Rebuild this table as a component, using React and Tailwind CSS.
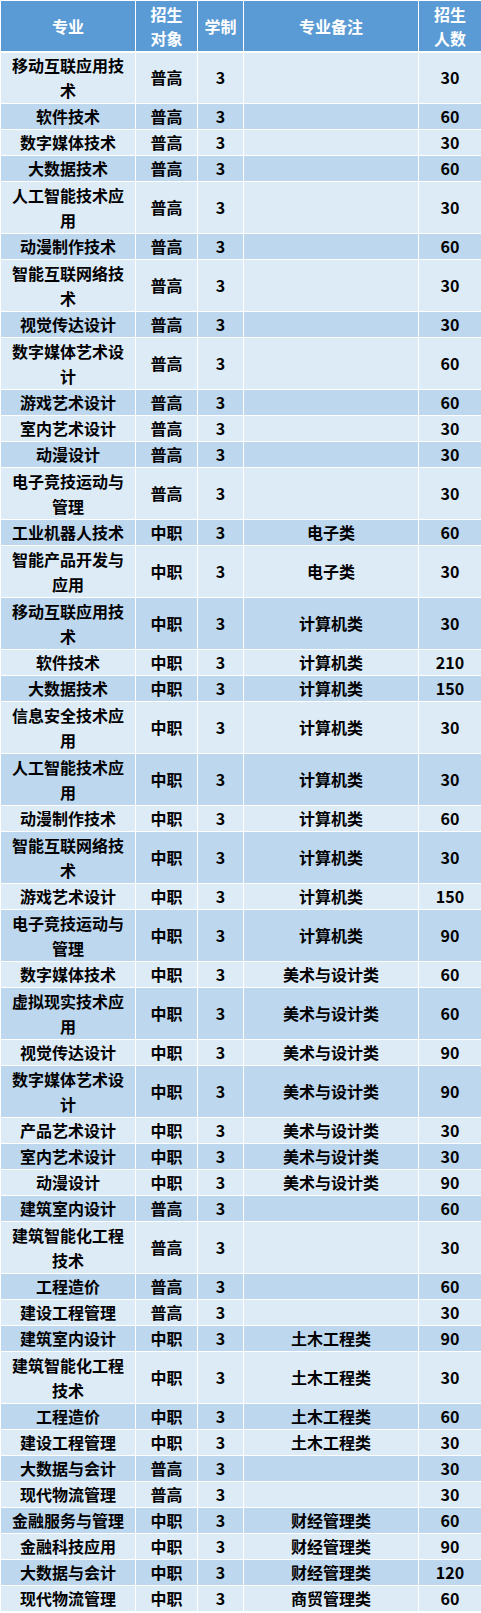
import React from 'react';

const rows = [
  ['移动互联应用技术', '普高', '3', '', '30', 2],
  ['软件技术', '普高', '3', '', '60'],
  ['数字媒体技术', '普高', '3', '', '30'],
  ['大数据技术', '普高', '3', '', '60'],
  ['人工智能技术应用', '普高', '3', '', '30', 2],
  ['动漫制作技术', '普高', '3', '', '60'],
  ['智能互联网络技术', '普高', '3', '', '30', 2],
  ['视觉传达设计', '普高', '3', '', '30'],
  ['数字媒体艺术设计', '普高', '3', '', '60', 2],
  ['游戏艺术设计', '普高', '3', '', '60'],
  ['室内艺术设计', '普高', '3', '', '30'],
  ['动漫设计', '普高', '3', '', '30'],
  ['电子竞技运动与管理', '普高', '3', '', '30', 2],
  ['工业机器人技术', '中职', '3', '电子类', '60'],
  ['智能产品开发与应用', '中职', '3', '电子类', '30', 2],
  ['移动互联应用技术', '中职', '3', '计算机类', '30', 2],
  ['软件技术', '中职', '3', '计算机类', '210'],
  ['大数据技术', '中职', '3', '计算机类', '150'],
  ['信息安全技术应用', '中职', '3', '计算机类', '30', 2],
  ['人工智能技术应用', '中职', '3', '计算机类', '30', 2],
  ['动漫制作技术', '中职', '3', '计算机类', '60'],
  ['智能互联网络技术', '中职', '3', '计算机类', '30', 2],
  ['游戏艺术设计', '中职', '3', '计算机类', '150'],
  ['电子竞技运动与管理', '中职', '3', '计算机类', '90', 2],
  ['数字媒体技术', '中职', '3', '美术与设计类', '60'],
  ['虚拟现实技术应用', '中职', '3', '美术与设计类', '60', 2],
  ['视觉传达设计', '中职', '3', '美术与设计类', '90'],
  ['数字媒体艺术设计', '中职', '3', '美术与设计类', '90', 2],
  ['产品艺术设计', '中职', '3', '美术与设计类', '30'],
  ['室内艺术设计', '中职', '3', '美术与设计类', '30'],
  ['动漫设计', '中职', '3', '美术与设计类', '90'],
  ['建筑室内设计', '普高', '3', '', '60'],
  ['建筑智能化工程技术', '普高', '3', '', '30', 2],
  ['工程造价', '普高', '3', '', '60'],
  ['建设工程管理', '普高', '3', '', '30'],
  ['建筑室内设计', '中职', '3', '土木工程类', '90'],
  ['建筑智能化工程技术', '中职', '3', '土木工程类', '30', 2],
  ['工程造价', '中职', '3', '土木工程类', '60'],
  ['建设工程管理', '中职', '3', '土木工程类', '30'],
  ['大数据与会计', '普高', '3', '', '30'],
  ['现代物流管理', '普高', '3', '', '30'],
  ['金融服务与管理', '中职', '3', '财经管理类', '60'],
  ['金融科技应用', '中职', '3', '财经管理类', '90'],
  ['大数据与会计', '中职', '3', '财经管理类', '120'],
  ['现代物流管理', '中职', '3', '商贸管理类', '60'],
];

const td = 'border border-white text-center align-middle p-0';

const App = () => {
  return (
    <div
      className="w-[481px] bg-white text-[16px] leading-[25px] text-black font-semibold"
      style={{ fontFamily: '"Noto Sans CJK SC", "Noto Sans", sans-serif' }}
    >
      <table className="w-[481px] table-fixed border-collapse border-l border-t border-l-[#c8c8c8] border-t-[#c8c8c8]">
        <colgroup>
          <col className="w-[135px]" />
          <col className="w-[62px]" />
          <col className="w-[46px]" />
          <col className="w-[175px]" />
          <col className="w-[63px]" />
        </colgroup>
        <thead>
          <tr className="h-[51px] bg-[#5b9bd5] text-white font-bold leading-[24px]">
            <th className={`${td} border-b-2`}>专业</th>
            <th className={`${td} border-b-2`}>招生<br />对象</th>
            <th className={`${td} border-b-2`}>学制</th>
            <th className={`${td} border-b-2`}>专业备注</th>
            <th className={`${td} border-b-2`}>招生<br />人数</th>
          </tr>
        </thead>
        <tbody>
          {rows.map((r, i) => (
            <tr
              key={i}
              className={`${r[5] === 2 ? 'h-[52px]' : 'h-[26px]'} ${i % 2 === 0 ? 'bg-[#ddebf7]' : 'bg-[#bdd7ee]'}`}
            >
              <td className={`${td} px-[4px]`}>{r[0]}</td>
              <td className={td}>{r[1]}</td>
              <td className={td}>{r[2]}</td>
              <td className={td}>{r[3]}</td>
              <td className={td}>{r[4]}</td>
            </tr>
          ))}
        </tbody>
      </table>
    </div>
  );
};

export default App;
